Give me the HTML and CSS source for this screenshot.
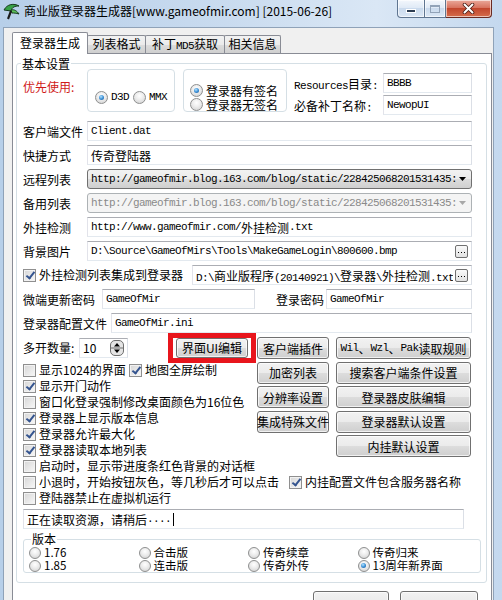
FILE: index.html
```html
<!DOCTYPE html>
<html lang="zh-CN">
<head>
  <meta charset="UTF-8">
  <meta name="viewport" content="width=device-width, initial-scale=1.0">
  <link rel="stylesheet" href="styles.css">
  <title>商业版登录器生成器</title>
</head>
<body>

  <div class="titlebar">
    <svg class="app-icon" width="18" height="17" viewBox="0 0 18 17">
      <path d="M1 7 C4 1, 11 0, 16 3 C12 3, 9 4, 8 8 Z" fill="#37a146" stroke="#183a1f" stroke-width="1"/>
      <path d="M8 7 C11 6, 14 8, 16 11 C13 10, 11 10, 9 10 Z" fill="#5cc15a" stroke="#183a1f" stroke-width="1"/>
      <path d="M8 8 L5 16" stroke="#1c1c1c" stroke-width="2.2"/>
    </svg>
    <span class="title">商业版登录器生成器[www.gameofmir.com] [2015-06-26]</span>
    <div class="caption">
      <span class="cap cap-min"><i></i></span>
      <span class="cap cap-max"><i></i></span>
      <span class="cap cap-close">
        <svg width="13" height="11" viewBox="0 0 13 11">
          <path d="M2.5 1.5 L10.5 9.5 M10.5 1.5 L2.5 9.5" stroke="#4a1c14" stroke-width="3.6" stroke-linecap="round"/>
          <path d="M2.5 1.5 L10.5 9.5 M10.5 1.5 L2.5 9.5" stroke="#fff" stroke-width="2" stroke-linecap="round"/>
        </svg>
      </span>
    </div>
  </div>

  <div class="client">
    <div class="tabs">
      <span class="tab active">登录器生成</span>
      <span class="tab tab-list">列表格式</span>
      <span class="tab tab-patch">补丁<span class="mono">MD5</span>获取</span>
      <span class="tab tab-info">相关信息</span>
    </div>

    <div class="tabpage">
      <fieldset class="group main-group">
        <legend>基本设置</legend>

        <div class="top-section">
          <div class="prefer">优先使用:</div>
          <div class="box box-render">
            <span class="radio on"><i class="dot"></i><span class="mono">D3D</span></span>
            <span class="radio"><i class="dot"></i><span class="mono">MMX</span></span>
          </div>
          <div class="box box-sign">
            <span class="radio on"><i class="dot"></i>登录器有签名</span>
            <span class="radio"><i class="dot"></i>登录器无签名</span>
          </div>
          <div class="res">
            <div class="res-row">
              <span class="res-label"><span class="mono">Resources</span>目录<span class="mono">:</span></span>
              <div class="edit mono">BBBB</div>
            </div>
            <div class="res-row">
              <span class="res-label">必备补丁名称<span class="mono">:</span></span>
              <div class="edit mono">NewopUI</div>
            </div>
          </div>
        </div>

        <div class="rows">
          <div class="row">
            <span class="label">客户端文件</span>
            <div class="edit mono">Client.dat</div>
          </div>
          <div class="row">
            <span class="label">快捷方式</span>
            <div class="edit">传奇登陆器</div>
          </div>
          <div class="row">
            <span class="label">远程列表</span>
            <div class="combo">
              <span class="combo-text mono">http://gameofmir.blog.163.com/blog/static/228425068201531435:</span>
              <svg class="arrow" width="7" height="4" viewBox="0 0 7 4"><path d="M0 0 H7 L3.5 4 Z" fill="#000"/></svg>
            </div>
          </div>
          <div class="row">
            <span class="label">备用列表</span>
            <div class="combo disabled">
              <span class="combo-text mono">http://gameofmir.blog.163.com/blog/static/228425068201531435:</span>
              <svg class="arrow" width="7" height="4" viewBox="0 0 7 4"><path d="M0 0 H7 L3.5 4 Z" fill="#a8a8a8"/></svg>
            </div>
          </div>
          <div class="row">
            <span class="label">外挂检测</span>
            <div class="edit mono">http://www.gameofmir.com/<span class="cjk">外挂检测</span>.txt</div>
          </div>
          <div class="row">
            <span class="label">背景图片</span>
            <div class="edit mono">
              <span class="edit-text">D:\Source\GameOfMirs\Tools\MakeGameLogin\800600.bmp</span>
              <span class="dots"><svg width="7" height="2" viewBox="0 0 7 2"><rect x="0" y="0" width="1" height="1"/><rect x="3" y="0" width="1" height="1"/><rect x="6" y="0" width="1" height="1"/></svg></span>
            </div>
          </div>
          <div class="row">
            <span class="check on check-wide"><i class="box13"></i>外挂检测列表集成到登录器</span>
            <div class="edit mono">
              <span class="edit-text">D:\<span class="cjk">商业版程序</span>(20140921)\<span class="cjk">登录器</span>\<span class="cjk">外挂检测</span>.txt</span>
              <span class="dots"><svg width="7" height="2" viewBox="0 0 7 2"><rect x="0" y="0" width="1" height="1"/><rect x="3" y="0" width="1" height="1"/><rect x="6" y="0" width="1" height="1"/></svg></span>
            </div>
          </div>
          <div class="row">
            <span class="label label-pwd">微端更新密码</span>
            <div class="edit mono pwd">GameOfMir</div>
            <span class="label label-login">登录密码</span>
            <div class="edit mono">GameOfMir</div>
          </div>
          <div class="row">
            <span class="label label-cfg">登录器配置文件</span>
            <div class="edit mono">GameOfMir.ini</div>
          </div>
        </div>

        <div class="lower">
          <div class="lower-left">
            <div class="multi">
              <span class="multi-label">多开数量:</span>
              <div class="edit spin-edit">
                <span class="edit-text">10</span>
                <svg class="spin" width="14" height="16" viewBox="0 0 14 16">
                  <rect x="0.5" y="0.5" width="13" height="15" rx="4.5" fill="#e4e4e4" stroke="#6f6f6f"/>
                  <line x1="1" y1="8" x2="13" y2="8" stroke="#6f6f6f"/>
                  <path d="M4 6.5 L7 3 L10 6.5 Z" fill="#000"/>
                  <path d="M4 9.5 L7 13 L10 9.5 Z" fill="#000"/>
                </svg>
              </div>
              <div class="highlight"><span class="btn">界面UI编辑</span></div>
            </div>
            <div class="check-row">
              <span class="check check-1024"><i class="box13"></i>显示1024的界面</span>
              <span class="check on"><i class="box13"></i>地图全屏绘制</span>
            </div>
            <span class="check on"><i class="box13"></i>显示开门动作</span>
            <span class="check"><i class="box13"></i>窗口化登录强制修改桌面颜色为16位色</span>
            <span class="check on"><i class="box13"></i>登录器上显示版本信息</span>
            <span class="check on"><i class="box13"></i>登录器允许最大化</span>
            <span class="check on"><i class="box13"></i>登录器读取本地列表</span>
          </div>

          <div class="btn-grid">
            <span class="btn">客户端插件</span>
            <span class="btn"><span class="mono">Wil</span>、<span class="mono">Wzl</span>、<span class="mono">Pak</span>读取规则</span>
            <span class="btn">加密列表</span>
            <span class="btn">搜索客户端条件设置</span>
            <span class="btn">分辨率设置</span>
            <span class="btn">登录器皮肤编辑</span>
            <span class="btn">集成特殊文件</span>
            <span class="btn">登录器默认设置</span>
            <span class="btn btn-last">内挂默认设置</span>
          </div>
        </div>

        <span class="check"><i class="box13"></i>启动时，显示带进度条红色背景的对话框</span>
        <div class="check-row">
          <span class="check"><i class="box13"></i>小退时，开始按钮灰色，等几秒后才可以点击</span>
          <span class="check on check-server"><i class="box13"></i>内挂配置文件包含服务器名称</span>
        </div>
        <span class="check"><i class="box13"></i>登陆器禁止在虚拟机运行</span>

        <div class="edit status">正在读取资源，请稍后<span class="mono">....</span><i class="caret"></i></div>

        <fieldset class="group version">
          <legend>版本</legend>
          <div class="version-grid">
            <span class="radio"><i class="dot"></i>1.76</span>
            <span class="radio"><i class="dot"></i>合击版</span>
            <span class="radio"><i class="dot"></i>传奇续章</span>
            <span class="radio"><i class="dot"></i>传奇归来</span>
            <span class="radio"><i class="dot"></i>1.85</span>
            <span class="radio"><i class="dot"></i>连击版</span>
            <span class="radio"><i class="dot"></i>传奇外传</span>
            <span class="radio on"><i class="dot"></i>13周年新界面</span>
          </div>
        </fieldset>
      </fieldset>

      <div class="bottom-buttons">
        <span class="btn btn-make"></span>
        <span class="btn btn-exit"></span>
      </div>
    </div>
  </div>

</body>
</html>
```

FILE: styles.css
```css
* {
  box-sizing: border-box;
}

body {
  margin: 0;
  width: 502px;
  height: 600px;
  overflow: hidden;
  font-family: "Noto Sans CJK SC", "Noto Sans", sans-serif;
  font-size: 12px;
  color: #000;
  background: linear-gradient(90deg, #b7cfe9 0%, #c9dbef 45%, #dae7f5 75%, #c4d8ee 100%);
}

.mono {
  font-family: "Liberation Mono", "Noto Sans CJK SC", monospace;
  font-size: 11px;
  letter-spacing: -0.6px;
}

.cjk {
  font-family: "Noto Sans CJK SC", sans-serif;
  font-size: 12px;
  letter-spacing: 0;
}

/* title bar */
.titlebar {
  height: 27px;
  display: flex;
  align-items: flex-start;
}

.app-icon {
  flex: none;
  margin: 3px 0 0 3px;
}

.title {
  margin-left: 3px;
  line-height: 22px;
  white-space: nowrap;
}

.caption {
  display: flex;
  margin-left: auto;
  margin-right: 10px;
}

.cap {
  height: 18px;
  display: flex;
  align-items: center;
  justify-content: center;
  border: 1px solid #5f7590;
  border-top: none;
  background: linear-gradient(#f3f7fc 0%, #e0eaf6 45%, #cadaed 50%, #dce8f5 100%);
  box-shadow: inset 0 0 0 1px rgba(255, 255, 255, 0.6);
}

.cap i {
  display: block;
}

.cap-min {
  width: 28px;
  border-radius: 0 0 0 4px;
}

.cap-min i {
  width: 10px;
  height: 4px;
  margin-top: 5px;
  background: #2d3d52;
  border: 1px solid #fff;
}

.cap-max {
  width: 21px;
  border-left: none;
}

.cap-max i {
  width: 10px;
  height: 8px;
  border: 1px solid #92a3b8;
  border-top-width: 2px;
}

.cap-close {
  width: 46px;
  border-left: none;
  border-color: #6a2b22;
  border-radius: 0 0 4px 0;
  background: linear-gradient(#eaa99b 0%, #d8735f 45%, #c2462d 50%, #d56d4c 100%);
}

/* window body */
.client {
  width: 491px;
  height: 573px;
  margin-left: 3px;
  padding: 4px 0 0 8px;
  border: 1px solid #8fa2b8;
  border-bottom: none;
  background: #f0f0f0;
}

.tabs {
  display: flex;
  align-items: flex-end;
  height: 21px;
  position: relative;
  z-index: 1;
}

.tab {
  height: 18px;
  margin-right: -1px;
  border: 1px solid #898c95;
  border-bottom: none;
  border-radius: 2px 2px 0 0;
  background: linear-gradient(#f2f2f2, #ebebeb 50%, #dddddd 50%, #cfcfcf);
  line-height: 16px;
  text-align: center;
  white-space: nowrap;
}

.tab.active {
  width: 76px;
  height: 22px;
  margin-bottom: -1px;
  position: relative;
  z-index: 2;
  background: #fff;
  line-height: 19px;
}

.tab-list {
  width: 59px;
}

.tab-patch {
  width: 80px;
}

.tab-info {
  width: 57px;
}

.tabpage {
  width: 480px;
  height: 560px;
  padding: 3px 0 0 3px;
  border: 1px solid #898c95;
  background: #fff;
}

/* group boxes */
.group {
  margin: 0;
  min-width: 0;
  border: 1px solid #d5dfe5;
  border-radius: 3px;
}

.group legend {
  padding: 0 1px;
  line-height: 13px;
}

.main-group {
  width: 471px;
  padding: 0 14px 9px 6px;
}

.main-group > legend {
  margin-left: -2px;
}

.top-section {
  display: flex;
  align-items: flex-start;
  height: 46px;
  margin-top: -1px;
}

.prefer {
  width: 64px;
  flex: none;
  padding-top: 10px;
  line-height: 16px;
  color: #d01a1a;
}

.box {
  flex: none;
  height: 43px;
  border: 1px solid #d5dfe5;
  border-radius: 4px;
}

.box-render {
  width: 88px;
  display: flex;
  padding: 21px 0 0 7px;
}

.box-render .radio + .radio {
  margin-left: 4px;
}

.box-sign {
  width: 104px;
  margin-left: 8px;
  padding: 13px 0 0 6px;
}

.box-sign .radio {
  height: 14px;
}

.res {
  width: 178px;
  margin: 4px 0 0 7px;
  display: flex;
  flex-direction: column;
  gap: 2px;
}

.res-row {
  display: flex;
  align-items: center;
  height: 20px;
}

.res-label {
  width: 89px;
  flex: none;
  white-space: nowrap;
}

.res-row .edit {
  flex: 1;
}

/* controls */
.radio {
  display: flex;
  align-items: center;
  height: 13px;
  line-height: 13px;
  white-space: nowrap;
}

.dot {
  width: 13px;
  height: 13px;
  margin-right: 3px;
  flex: none;
  position: relative;
  border: 1px solid #8e8f8f;
  border-radius: 50%;
  background: radial-gradient(circle at 50% 35%, #ffffff 0, #ececec 45%, #cdcdcd 100%);
}

.radio.on .dot::after {
  content: "";
  position: absolute;
  left: 3px;
  top: 3px;
  width: 5px;
  height: 5px;
  border-radius: 50%;
  background: radial-gradient(circle at 40% 35%, #b5e3ff 0, #3d92d8 50%, #1c4f8c 100%);
}

.check {
  display: flex;
  align-items: center;
  height: 16px;
  line-height: 16px;
  white-space: nowrap;
}

.box13 {
  width: 13px;
  height: 13px;
  margin-right: 3px;
  flex: none;
  position: relative;
  border: 1px solid #8f8f8f;
  background: linear-gradient(135deg, #d6d6d6, #f8f8f8);
  box-shadow: inset 0 0 0 1px #f2f2f2;
}

.check.on .box13::after {
  content: "";
  position: absolute;
  left: 3.5px;
  top: 0.5px;
  width: 3px;
  height: 7px;
  border: solid #34548f;
  border-width: 0 2px 2px 0;
  transform: rotate(38deg);
}

.check-row {
  display: flex;
}

.check-wide {
  width: 169px;
  flex: none;
}

.check-1024 {
  width: 106px;
}

.check-server {
  margin-left: 10px;
}

.edit {
  height: 20px;
  display: flex;
  align-items: center;
  padding-left: 3px;
  border: 1px solid;
  border-color: #abadb3 #dbdfe6 #e3e9ef #e2e3ea;
  background: #fff;
  white-space: nowrap;
  overflow: hidden;
}

.edit-text {
  flex: 1;
  overflow: hidden;
}

.dots {
  width: 13px;
  height: 13px;
  margin: 0 3px 0 2px;
  flex: none;
  display: flex;
  align-items: flex-end;
  justify-content: center;
  padding-bottom: 3px;
  border: 1px solid #707070;
  border-radius: 2px;
  background: linear-gradient(#fafafa, #e2e2e2);
}

.combo {
  flex: 1;
  height: 20px;
  display: flex;
  align-items: center;
  padding: 0 5px 0 3px;
  border: 1px solid #707070;
  border-radius: 3px;
  background: linear-gradient(#f2f2f2 0, #ebebeb 50%, #dddddd 50%, #cfcfcf 100%);
  overflow: hidden;
}

.combo-text {
  flex: 1;
  overflow: hidden;
  white-space: nowrap;
}

.combo .arrow {
  flex: none;
  margin-left: 3px;
}

.combo.disabled {
  border-color: #adb2b5;
  background: #f4f4f4;
  color: #8a8a8a;
}

.btn {
  height: 22px;
  display: flex;
  align-items: center;
  justify-content: center;
  border: 1px solid #707070;
  border-radius: 3px;
  background: linear-gradient(#f2f2f2 0, #ebebeb 50%, #dddddd 50%, #cfcfcf 100%);
  box-shadow: inset 0 0 0 1px rgba(255, 255, 255, 0.7);
  white-space: nowrap;
}

/* form rows */
.rows {
  display: flex;
  flex-direction: column;
  gap: 4px;
  margin-top: 6px;
}

.row {
  display: flex;
  align-items: center;
  height: 20px;
}

.row .edit {
  flex: 1;
}

.label {
  width: 64px;
  flex: none;
  white-space: nowrap;
}

.label-pwd {
  width: 79px;
}

.row .edit.pwd {
  flex: none;
  width: 153px;
}

.label-login {
  width: 71px;
  padding-right: 2px;
  text-align: right;
}

.label-cfg {
  width: 88px;
}

/* lower block */
.lower {
  display: flex;
}

.lower-left {
  width: 234px;
  flex: none;
}

.multi {
  display: flex;
  align-items: center;
  height: 29px;
}

.multi-label {
  width: 56px;
  flex: none;
}

.spin-edit {
  width: 49px;
  flex: none;
}

.spin {
  flex: none;
  margin-right: 3px;
}

.highlight {
  height: 30px;
  margin: 0 1px 0 auto;
  padding: 0 3px;
  border: 5px solid #e8151c;
}

.highlight .btn {
  width: 72px;
  height: 20px;
}

.btn-grid {
  display: grid;
  grid-template-columns: 72px 135px;
  grid-auto-rows: 22px;
  gap: 2.5px 7px;
  padding-top: 4px;
}

.btn-last {
  grid-column: 2;
}

.status {
  width: 441px;
  margin-top: 3px;
}

.caret {
  width: 1px;
  height: 13px;
  margin-left: 2px;
  background: #000;
}

.version {
  width: 458px;
  margin-top: 3px;
  padding: 0 0 0 5px;
}

.version legend {
  margin-left: 2px;
  line-height: 14px;
}

.version-grid {
  display: grid;
  grid-template-columns: repeat(4, 109.5px);
  grid-auto-rows: 13px;
  font-size: 11.5px;
}

.version-grid .dot {
  width: 12px;
  height: 12px;
}

.version-grid .radio.on .dot::after {
  left: 2.5px;
  top: 2.5px;
}

.bottom-buttons {
  display: flex;
  justify-content: flex-end;
  gap: 11px;
  margin-top: 8px;
  padding-right: 13px;
}

.btn-make {
  width: 76px;
}

.btn-exit {
  width: 78px;
}
```
